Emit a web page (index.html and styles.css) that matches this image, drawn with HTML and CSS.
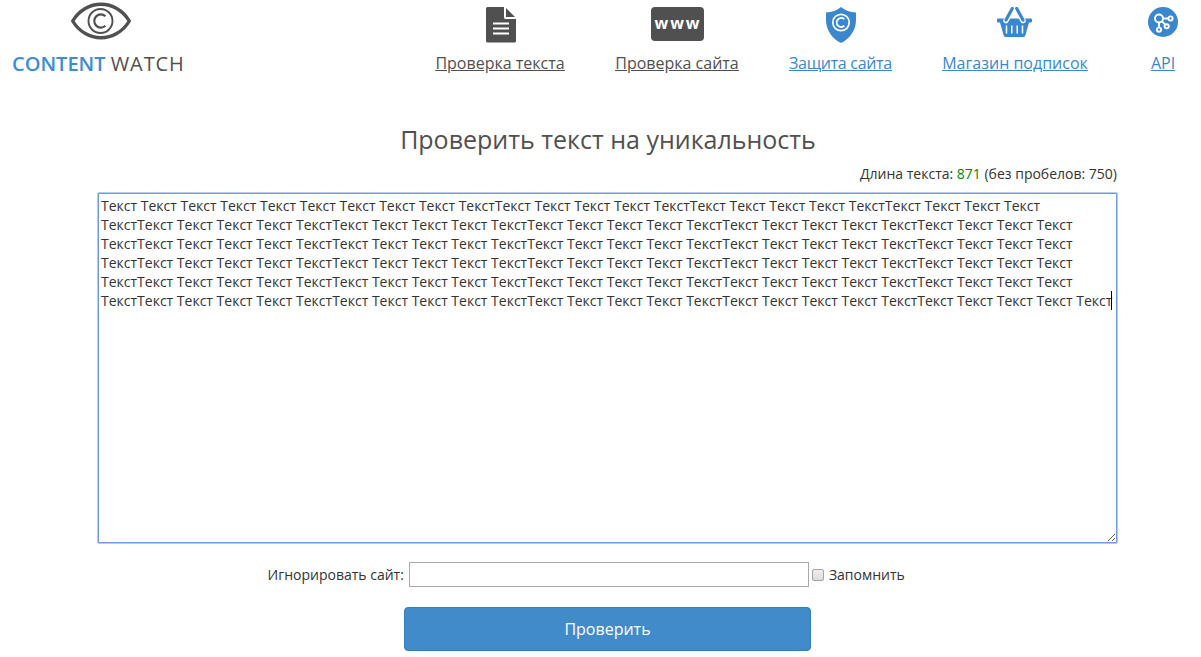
FILE: index.html
```html
<!DOCTYPE html>
<html lang="ru">

<head>
    <meta charset="utf-8">
    <title>Content Watch</title>
    <link rel="stylesheet" href="styles.css">
</head>

<body>
    <header class="header">
        <a class="logo" href="#">
            <svg class="logo-eye" width="62" height="38" viewBox="0 0 62 38">
                <path d="M2.700 19C16-3.300 46-3.300 59.300 19C46 41.300 16 41.300 2.700 19Z" fill="none" stroke="#505050" stroke-width="3.400" stroke-linejoin="round"/>
                <circle cx="30.500" cy="19" r="12" fill="none" stroke="#505050" stroke-width="1.900"/>
                <path d="M35.400 14.200A6.600 6.600 0 1 0 35.400 23.800" fill="none" stroke="#505050" stroke-width="2.200"/>
            </svg>
            <span class="logo-text"><b>CONTENT</b> <span>WATCH</span></span>
        </a>
        <nav class="menu">
            <a class="menu-item dark check-text" href="#">
                <svg width="30" height="36" viewBox="0 0 30 36">
                    <path d="M1.500 0H18V10.500Q18 12 19.500 12H30V34Q30 35.500 28.500 35.500H1.500Q0 35.500 0 34V1.500Q0 0 1.500 0Z" fill="#505050"/>
                    <path d="M20 1L29 10H20Z" fill="#505050"/>
                    <path d="M7 16.500H23M7 21.500H23M7 26.500H23" stroke="#fff" stroke-width="2.200"/>
                </svg>
                <span>Проверка текста</span>
            </a>
            <a class="menu-item dark check-site" href="#">
                <i class="www">www</i>
                <span>Проверка сайта</span>
            </a>
            <a class="menu-item protect" href="#">
                <svg width="30" height="36" viewBox="0 0 30 36">
                    <path d="M15 0C19 3 24 5.500 30 5.500V13C30 23 24 31.500 15 36C6 31.500 0 23 0 13V5.500C6 5.500 11 3 15 0Z" fill="#3a87cd"/>
                    <circle cx="15" cy="15.500" r="8.200" fill="none" stroke="#fff" stroke-width="1.700"/>
                    <path d="M18.300 12.200A4.500 4.500 0 1 0 18.300 18.800" fill="none" stroke="#fff" stroke-width="1.900"/>
                </svg>
                <span>Защита сайта</span>
            </a>
            <a class="menu-item shop" href="#">
                <svg width="35" height="30" viewBox="0 0 35 30">
                    <path d="M1 11.500H34Q35 11.500 35 12.500V14.500Q35 15.500 34 15.500H32L28.500 28Q28 30 26.500 30H8.500Q7 30 6.500 28L3 15.500H1Q0 15.500 0 14.500V12.500Q0 11.500 1 11.500Z" fill="#3a87cd"/>
                    <path d="M15.500 2L9 13.500M19.500 2L26 13.500" stroke="#fff" stroke-width="5.500" stroke-linecap="round"/>
                    <path d="M15.300 1.500L9 13M19.700 1.500L26 13" stroke="#3a87cd" stroke-width="3.200" stroke-linecap="round"/>
                    <path d="M9.500 18.500V26.500M14.800 18.500V26.500M20.200 18.500V26.500M25.500 18.500V26.500" stroke="#fff" stroke-width="1.500"/>
                </svg>
                <span>Магазин подписок</span>
            </a>
            <a class="menu-item api" href="#">
                <svg width="30" height="30" viewBox="0 0 30 30">
                    <circle cx="15" cy="15" r="15" fill="#3a87cd"/>
                    <g fill="none" stroke="#fff" stroke-width="1.900">
                        <circle cx="11" cy="11.500" r="4"/>
                        <circle cx="22.500" cy="11.500" r="2.100"/>
                        <circle cx="18.700" cy="19.300" r="2.100"/>
                        <circle cx="11" cy="22.700" r="2.100"/>
                        <path d="M15 11.500H20.400M14 14.300L17.200 17.700M11 15.500V20.600"/>
                    </g>
                </svg>
                <span>API</span>
            </a>
        </nav>
    </header>

    <form class="check-form">
        <h1>Проверить текст на уникальность</h1>
        <div class="length">Длина текста: <span class="count">871</span> (без пробелов: 750)</div>
        <div class="text-box">
            <textarea class="text" wrap="off" spellcheck="false">
Текст Текст Текст Текст Текст Текст Текст Текст Текст ТекстТекст Текст Текст Текст ТекстТекст Текст Текст Текст ТекстТекст Текст Текст Текст
ТекстТекст Текст Текст Текст ТекстТекст Текст Текст Текст ТекстТекст Текст Текст Текст ТекстТекст Текст Текст Текст ТекстТекст Текст Текст Текст
ТекстТекст Текст Текст Текст ТекстТекст Текст Текст Текст ТекстТекст Текст Текст Текст ТекстТекст Текст Текст Текст ТекстТекст Текст Текст Текст
ТекстТекст Текст Текст Текст ТекстТекст Текст Текст Текст ТекстТекст Текст Текст Текст ТекстТекст Текст Текст Текст ТекстТекст Текст Текст Текст
ТекстТекст Текст Текст Текст ТекстТекст Текст Текст Текст ТекстТекст Текст Текст Текст ТекстТекст Текст Текст Текст ТекстТекст Текст Текст Текст
ТекстТекст Текст Текст Текст ТекстТекст Текст Текст Текст ТекстТекст Текст Текст Текст ТекстТекст Текст Текст Текст ТекстТекст Текст Текст Текст Текст</textarea>
            <span class="caret"></span>
        </div>
        <div class="ignore">
            <label for="site">Игнорировать сайт:</label>
            <input type="text" id="site" name="site">
            <input type="checkbox" id="remember" name="remember">
            <label for="remember">Запомнить</label>
        </div>
        <button type="submit">Проверить</button>
    </form>
</body>

</html>
```
FILE: styles.css
```css
body {
    margin: 0;
    font-family: "Open Sans", sans-serif;
    font-size: 14px;
    color: #333;
    background: #fff;
    overflow: hidden;
}

.header {
    display: flex;
    justify-content: space-between;
    height: 80px;
    padding: 0 25px 0 12px;
}

.logo {
    display: flex;
    flex-direction: column;
    width: 172px;
    padding-top: 2px;
    text-decoration: none;
    color: #505050;
}

.logo-eye {
    margin-left: 58px;
}

.logo-text {
    margin-top: 11px;
    font-size: 20px;
    line-height: 26px;
    white-space: nowrap;
}

.logo-text b {
    font-weight: 600;
    color: #3a8dd6;
}

.logo-text span {
    letter-spacing: 0.9px;
}

/* menu */
.menu {
    display: flex;
    gap: 50px;
    padding-top: 7px;
}

.menu-item {
    display: flex;
    flex-direction: column;
    justify-content: space-between;
    align-items: center;
    height: 67px;
    font-size: 16px;
    line-height: 22px;
    white-space: nowrap;
    color: #3a87cd;
}

.menu-item span {
    text-decoration: underline;
}

.dark {
    color: #505050;
}

.check-text {
    width: 130px;
}

.check-text svg {
    margin-left: 2px;
}

.check-site {
    width: 124px;
}

.protect {
    width: 103px;
    letter-spacing: -0.3px;
}

.shop {
    width: 146px;
}

.shop svg {
    margin-right: 2px;
}

.api {
    width: 26px;
    margin-left: 12px;
}

.www {
    width: 53px;
    height: 34px;
    border-radius: 4px;
    font-size: 16px;
    font-style: normal;
    font-weight: 700;
    line-height: 32px;
    letter-spacing: 2px;
    text-indent: 2px;
    text-align: center;
    color: #fff;
    background: #505050;
}

/* form */
.check-form {
    width: 1020px;
    margin-left: 98px;
    padding-top: 41px;
}

h1 {
    margin: 0;
    font-size: 25px;
    font-weight: 400;
    line-height: 36px;
    text-align: center;
    color: #505050;
}

.length {
    margin-top: 7px;
    padding-right: 1px;
    line-height: 20px;
    text-align: right;
}

.count {
    color: #080;
}

.text-box {
    position: relative;
    height: 350px;
    margin-top: 9px;
}

.text {
    box-sizing: border-box;
    display: block;
    width: 1019px;
    height: 350px;
    padding: 2px;
    border: 1px solid #6f9ade;
    border-radius: 1px;
    outline: none;
    box-shadow: 0 0 0 1px #b3cbf3;
    overflow: hidden;
    font: 14px/19px "Open Sans", sans-serif;
    color: #333;
}

.caret {
    position: absolute;
    left: 1013px;
    top: 98px;
    width: 1px;
    height: 19px;
    background: #000;
}

.ignore {
    display: flex;
    align-items: center;
    height: 25px;
    margin: 19px 0 20px 169.500px;
}

.ignore input[type="text"] {
    box-sizing: border-box;
    width: 400px;
    height: 25px;
    margin: 0 3px 0 5px;
    border: 1px solid #a9a9a9;
}

.ignore input[type="checkbox"] {
    appearance: none;
    box-sizing: border-box;
    width: 12px;
    height: 12px;
    margin: 1px 5px 0 0;
    border: 1px solid #a5a5a5;
    border-radius: 2px;
    background: linear-gradient(#eee, #dcdcdc);
}

button {
    display: block;
    width: 407px;
    height: 44px;
    margin: 0 auto 0 306px;
    padding: 0;
    border: 1px solid #357ebd;
    border-radius: 4px;
    font: 16px "Open Sans", sans-serif;
    color: #fff;
    background: #428bca;
}
```
